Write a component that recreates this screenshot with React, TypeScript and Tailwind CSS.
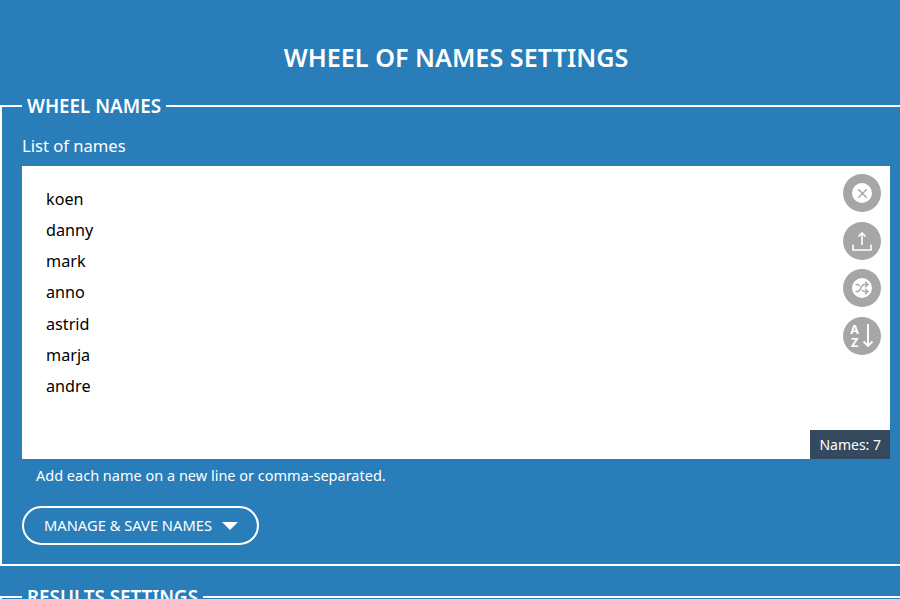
import { Shuffle, X } from "lucide-react";

const NAMES = ["koen", "danny", "mark", "anno", "astrid", "marja", "andre"];

function ToolButton({ children }: { children: React.ReactNode }) {
  return (
    <button type="button" className="flex h-[38px] w-[38px] items-center justify-center rounded-full bg-[#a6a6a6] text-white">
      {children}
    </button>
  );
}

export default function App() {
  return (
    <div className="h-[599px] overflow-hidden bg-[#297db8] font-['Noto_Sans',sans-serif] text-white">
      <h1 className="pt-[40px] pl-[12px] text-center text-[25.2px] leading-[34px] font-semibold">WHEEL OF NAMES SETTINGS</h1>

      <fieldset className="mt-[20px] -mr-[4px] border-2 border-white pr-[12px] pb-[19px] pl-[20px]">
        <legend className="px-[5px] text-[18.8px] leading-[24px] font-semibold">WHEEL NAMES</legend>
        <div className="pt-[16px] text-[16.6px] leading-[24px]">List of names</div>

        <div className="relative mt-[8px] h-[293px] bg-white pt-[18px] pl-[24px] text-[16.2px] leading-[31.15px] text-black">
          {NAMES.map((name) => (
            <div key={name}>{name}</div>
          ))}

          <div className="absolute top-[8px] right-[9px] flex flex-col gap-[9.5px]">
            <ToolButton>
              <span className="flex h-[20px] w-[20px] items-center justify-center rounded-full bg-white text-[#a6a6a6]">
                <X size={15} strokeWidth={2.4} />
              </span>
            </ToolButton>
            <ToolButton>
              <svg width="20" height="22" viewBox="0 0 20 22" fill="none" stroke="currentColor" strokeWidth="1.6">
                <path d="M10 15V3M6.500 6.500 10 3l3.500 3.500M1 14.500V20h18v-5.500" />
              </svg>
            </ToolButton>
            <ToolButton>
              <span className="flex h-[20px] w-[20px] items-center justify-center rounded-full bg-white text-[#a6a6a6]">
                <Shuffle size={14} strokeWidth={2.4} />
              </span>
            </ToolButton>
            <ToolButton>
              <span className="flex items-center gap-[3px]">
                <span className="flex flex-col text-[12.5px] leading-[13px] font-bold">
                  <span>A</span>
                  <span>Z</span>
                </span>
                <svg width="12" height="25" viewBox="0 0 12 25" fill="none" stroke="currentColor" strokeWidth="1.9">
                  <path d="M6 1v22M1.500 18.500 6 23l4.500-4.500" />
                </svg>
              </span>
            </ToolButton>
          </div>

          <div className="absolute right-0 bottom-0 bg-[#34495e] px-[9px] text-[14px] leading-[29px] text-white">Names: 7</div>
        </div>

        <p className="mt-[4px] pl-[14px] text-[14.5px] leading-[24px]">Add each name on a new line or comma-separated.</p>

        <button type="button" className="mt-[19px] flex h-[39px] w-[237px] items-center rounded-full border-2 border-white pl-[20px] text-[14.7px]">
          MANAGE &amp; SAVE NAMES
          <span className="ml-[10px] h-0 w-0 border-x-[8px] border-t-[8px] border-x-transparent border-t-white" />
        </button>
      </fieldset>

      <fieldset className="mt-[19px] -mr-[4px] border-2 border-white pl-[20px]">
        <legend className="px-[5px] text-[18.8px] leading-[24px] font-semibold">RESULTS SETTINGS</legend>
      </fieldset>
    </div>
  );
}
